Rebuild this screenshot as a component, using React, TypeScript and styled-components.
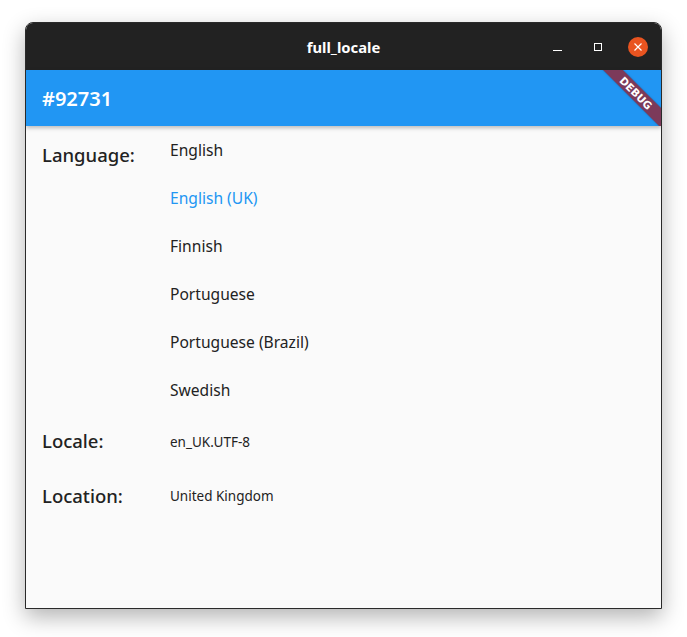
import React from "react";
import styled, { createGlobalStyle } from "styled-components";

const Global = createGlobalStyle`
  html, body { margin: 0; padding: 0; background: #ffffff; }
  body { font-family: "Noto Sans", "Open Sans", sans-serif; }
`;

const Stage = styled.div`
  width: 687px;
  height: 637px;
  padding: 22px 0 0 25px;
  box-sizing: border-box;
`;

const Window = styled.div`
  width: 637px;
  height: 587px;
  box-sizing: border-box;
  border: 1px solid #2a2a2a;
  border-radius: 8px 8px 0 0;
  background: #fafafa;
  display: flex;
  flex-direction: column;
  overflow: hidden;
  box-shadow: 0 8px 22px rgba(0, 0, 0, 0.3);
`;

const TitleBar = styled.div`
  height: 47px;
  flex: none;
  background: #222222;
  display: flex;
  align-items: center;
  justify-content: center;
  position: relative;
`;

const Title = styled.div`
  color: #ffffff;
  font-weight: 700;
  font-size: 14.8px;
`;

const Controls = styled.div`
  position: absolute;
  right: 13px;
  top: 0;
  height: 100%;
  display: flex;
  align-items: center;
  gap: 20px;
`;

const Ctrl = styled.div`
  width: 20px;
  height: 20px;
  display: flex;
  align-items: center;
  justify-content: center;
`;

const CloseBtn = styled(Ctrl)`
  border-radius: 50%;
  background: #e95420;
`;

const AppBar = styled.div`
  height: 56px;
  flex: none;
  background: #2196f3;
  display: flex;
  align-items: center;
  padding-left: 16px;
  position: relative;
  z-index: 1;
  box-shadow: 0 2px 4px rgba(0, 0, 0, 0.25);
  overflow: hidden;
`;

const AppTitle = styled.div`
  color: #ffffff;
  font-size: 20px;
  font-weight: 600;
`;

const Banner = styled.div`
  position: absolute;
  top: 16px;
  right: -35px;
  width: 120px;
  height: 14px;
  background: rgb(124, 58, 90);
  box-shadow: 0 0 2px rgba(0, 0, 0, 0.3);
  transform: rotate(45deg);
  display: flex;
  align-items: center;
  justify-content: center;
  color: #ffffff;
  font-size: 10.5px;
  font-weight: 700;
  line-height: 1;
  font-family: "DejaVu Sans", sans-serif;
`;

const Body = styled.div`
  flex: 1;
  padding: 0 16px;
`;

const Row = styled.div`
  display: flex;
`;

const Label = styled.div<{ $top: number; $bottom: number }>`
  width: 128px;
  flex: none;
  padding: ${(p) => p.$top}px 0 ${(p) => p.$bottom}px;
  font-size: 18.5px;
  font-weight: 500;
  line-height: 24px;
  color: #222222;
`;

const List = styled.div`
  display: flex;
  flex-direction: column;
`;

const Item = styled.div<{ $selected?: boolean }>`
  height: 48px;
  display: flex;
  align-items: center;
  font-size: 15.6px;
  color: ${(p) => (p.$selected ? "#2196f3" : "#222222")};
`;

const Value = styled.div`
  display: flex;
  align-items: center;
  font-size: 13.5px;
  color: #222222;
`;

const langs = ["English", "English (UK)", "Finnish", "Portuguese", "Portuguese (Brazil)", "Swedish"];

export default function App() {
  return (
    <>
      <Global />
      <Stage>
        <Window>
          <TitleBar>
            <Title>full_locale</Title>
            <Controls>
              <Ctrl>
                <svg width="10" height="10" viewBox="0 0 10 10">
                  <rect x="0" y="8" width="9" height="1" fill="#fff" />
                </svg>
              </Ctrl>
              <Ctrl>
                <svg width="10" height="10" viewBox="0 0 10 10">
                  <rect x="1.5" y="1.5" width="7" height="7" fill="none" stroke="#fff" strokeWidth="1" />
                </svg>
              </Ctrl>
              <CloseBtn>
                <svg width="10" height="10" viewBox="0 0 10 10">
                  <path d="M1.5 1.5 L8.5 8.5 M8.5 1.5 L1.5 8.5" stroke="#fff" strokeWidth="1.2" />
                </svg>
              </CloseBtn>
            </Controls>
          </TitleBar>
          <AppBar>
            <AppTitle>#92731</AppTitle>
            <Banner>DEBUG</Banner>
          </AppBar>
          <Body>
            <Row>
              <Label $top={17} $bottom={17}>Language:</Label>
              <List>
                {langs.map((l) => (
                  <Item key={l} $selected={l === "English (UK)"}>
                    {l}
                  </Item>
                ))}
              </List>
            </Row>
            <Row>
              <Label $top={15} $bottom={16}>Locale:</Label>
              <Value>en_UK.UTF-8</Value>
            </Row>
            <Row>
              <Label $top={15} $bottom={15}>Location:</Label>
              <Value>United Kingdom</Value>
            </Row>
          </Body>
        </Window>
      </Stage>
    </>
  );
}
